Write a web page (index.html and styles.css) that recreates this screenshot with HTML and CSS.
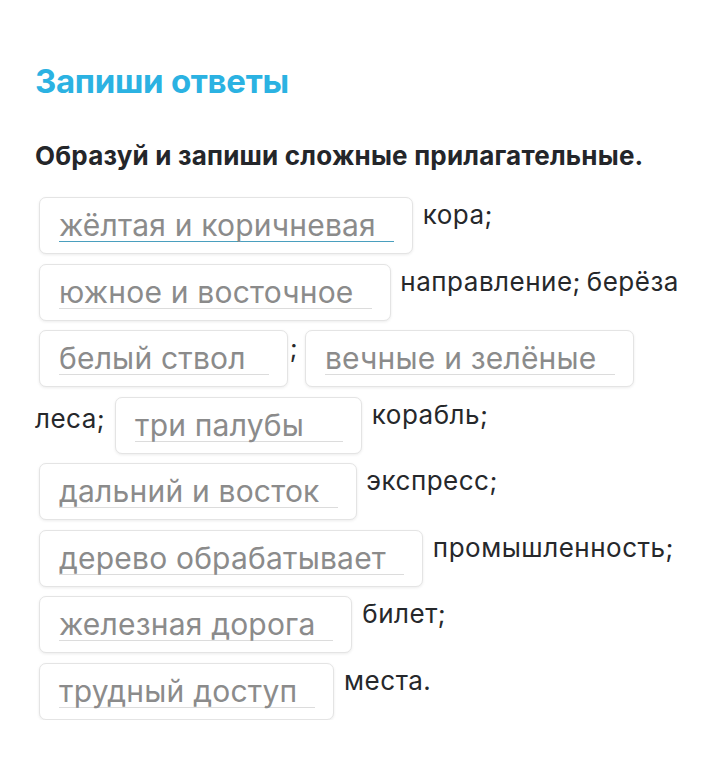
FILE: index.html
```html
<!DOCTYPE html>
<html lang="ru">
<head>
<meta charset="utf-8">
<title>Запиши ответы</title>
<link rel="stylesheet" href="styles.css">
</head>
<body>
<main class="page">
  <h1 class="title">Запиши ответы</h1>
  <p class="task">Образуй и запиши сложные прилагательные.</p>
  <div class="lines">
    <div class="line"><span class="field"><span class="answer answer--active">жёлтая и коричневая</span></span> <span class="word">кора;</span></div>
    <div class="line"><span class="field"><span class="answer">южное и восточное</span></span> <span class="word">направление; берёза</span></div>
    <div class="line"><span class="field"><span class="answer answer--roomy">белый ствол</span></span><span class="word word--tight">;</span> <span class="field"><span class="answer">вечные и зелёные</span></span></div>
    <div class="line"><span class="word word--lead">леса;</span> <span class="field"><span class="answer answer--wide">три палубы</span></span> <span class="word">корабль;</span></div>
    <div class="line"><span class="field"><span class="answer">дальний и восток</span></span> <span class="word">экспресс;</span></div>
    <div class="line"><span class="field"><span class="answer">дерево обрабатывает</span></span> <span class="word">промышленность;</span></div>
    <div class="line"><span class="field"><span class="answer">железная дорога</span></span> <span class="word">билет;</span></div>
    <div class="line"><span class="field"><span class="answer">трудный доступ</span></span> <span class="word">места.</span></div>
  </div>
</main>
</body>
</html>
```
FILE: styles.css
```css
* { box-sizing: border-box; }
html, body { margin: 0; padding: 0; background: #ffffff; }
body { font-family: Inter, "Noto Sans", sans-serif; color: #222428; }

.page { padding: 60px 0 0 35px; }

.title {
  margin: 0;
  font-size: 33px;
  line-height: 42px;
  font-weight: 700;
  color: #2bb2e2;
  letter-spacing: -0.3px;
}

.task {
  margin: 38px 0 0;
  font-size: 26px;
  line-height: 32px;
  font-weight: 700;
  color: #24262a;
  letter-spacing: 0.2px;
}

.lines {
  margin-top: 25px;
  display: flex;
  flex-direction: column;
  gap: 9.5px;
}

.line {
  white-space: nowrap;
  font-size: 26px;
  line-height: 30px;
  height: 57px;
  letter-spacing: 0.5px;
  word-spacing: -2px;
}

.field {
  display: inline-block;
  vertical-align: top;
  height: 57px;
  margin: 0 4px;
  padding: 12px 18px 0 19px;
  border: 1px solid #e4e4e4;
  border-radius: 7px;
  box-shadow: 0 1px 3px rgba(0, 0, 0, 0.08);
  background: #fff;
  letter-spacing: 0;
  word-spacing: 0;
}

.answer {
  display: inline-block;
  font-size: 30px;
  line-height: 31px;
  letter-spacing: 0.2px;
  padding-right: 18px;
  color: #8b8b8b;
  border-bottom: 1px solid #dcdcdc;
}

.answer--active { border-bottom-color: #4a9fbe; }
.answer--roomy { padding-right: 23px; }
.answer--wide { padding-right: 39px; }

.word {
  display: inline-block;
  vertical-align: top;
  padding-top: 3px;
  color: #26282b;
}

.word--lead { padding-top: 7px; }
.word--tight { margin-left: -2px; margin-right: -3px; }
```
